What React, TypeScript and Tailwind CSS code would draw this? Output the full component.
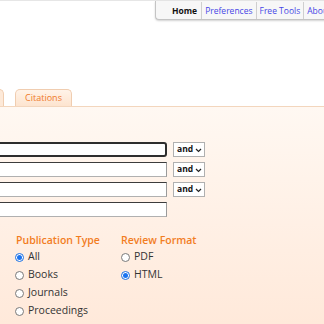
import React from "react";

function Radio({ checked, label }: { checked?: boolean; label: string }) {
  return (
    <div className="flex items-center h-[18px] gap-[4px]">
      {checked ? (
        <span className="w-[9px] h-[9px] rounded-full border border-[#1a6fe0] bg-white flex items-center justify-center">
          <span className="w-[5px] h-[5px] rounded-full bg-[#1a73f0]" />
        </span>
      ) : (
        <span className="w-[9px] h-[9px] rounded-full border border-[#7a7a7a] bg-white" />
      )}
      <span className="text-[10.5px] text-[#333]">{label}</span>
    </div>
  );
}

function AndSelect() {
  return (
    <div className="ml-[6px] w-[32px] h-[15px] border border-[#b0b0b0] bg-white flex items-center pl-[3px] gap-[2px]">
      <span className="text-[8.5px] font-bold text-[#111] leading-none">and</span>
      <svg width="7" height="5" viewBox="0 0 7 5" className="mt-[1px]">
        <path d="M1 1 L3.5 3.5 L6 1" fill="none" stroke="#222" strokeWidth="1.2" />
      </svg>
    </div>
  );
}

export default function App() {
  return (
    <div
      className="w-[324px] h-[324px] overflow-hidden bg-white flex flex-col"
      style={{ fontFamily: '"Open Sans", "Liberation Sans", sans-serif' }}
    >
      <div className="border-t border-[#e6e6e6] flex">
        <div className="ml-[155px] h-[19px] flex items-center bg-[#f7f7f7] border-l border-b border-[#c4c4c4] rounded-bl-[4px] shadow-[0_1px_2px_rgba(0,0,0,0.18)] whitespace-nowrap shrink-0">
          <span className="pl-[16px] pr-[4px] text-[8.5px] font-bold text-[#111] border-r border-[#cfcfcf] leading-[17px]">Home</span>
          <span className="px-[3px] text-[8.5px] text-[#4646e6] border-r border-[#cfcfcf] leading-[17px]">Preferences</span>
          <span className="px-[3px] text-[8.5px] text-[#4646e6] border-r border-[#cfcfcf] leading-[17px]">Free Tools</span>
          <span className="px-[3px] text-[8.5px] text-[#4646e6] leading-[17px]">About</span>
        </div>
      </div>
      <div className="mt-[69px] flex items-end gap-[11px] -ml-[56px] h-[17px]">
        <div className="w-[60px] h-[17px] rounded-t-[5px] border border-b-0 border-[#f0cdb0] bg-[#fde9d8]" />
        <div className="w-[57px] h-[17px] rounded-t-[5px] border border-b-0 border-[#f0cdb0] bg-gradient-to-b from-[#fff3e8] to-[#fde4cf] flex items-center justify-center">
          <span className="text-[9px] text-[#f07a2a] font-medium">Citations</span>
        </div>
      </div>
      <div className="flex-1 border-t border-[#f3d6bd] bg-gradient-to-b from-[#fff8f2] to-[#ffe9da] pt-[35px]">
        <div className="flex flex-col gap-[5px] -ml-[40px]">
          <div className="flex items-center">
            <div className="w-[207px] h-[15px] border-2 border-[#2e2e2e] rounded-[3px] bg-white" />
            <AndSelect />
          </div>
          <div className="flex items-center">
            <div className="w-[207px] h-[15px] border border-t-[#3c3c3c] border-l-[#3c3c3c] border-r-[#9a9a9a] border-b-[#b0b0b0] bg-white" />
            <AndSelect />
          </div>
          <div className="flex items-center">
            <div className="w-[207px] h-[15px] border border-t-[#3c3c3c] border-l-[#3c3c3c] border-r-[#9a9a9a] border-b-[#b0b0b0] bg-white" />
            <AndSelect />
          </div>
          <div className="flex items-center">
            <div className="w-[207px] h-[15px] border border-t-[#3c3c3c] border-l-[#3c3c3c] border-r-[#9a9a9a] border-b-[#b0b0b0] bg-white" />
          </div>
        </div>
        <div className="flex mt-[15px] ml-[15px]">
          <div className="w-[106px] flex flex-col">
            <div className="text-[10.5px] font-semibold text-[#f27d1f] h-[16px] leading-[16px] ml-[1px]">Publication Type</div>
            <Radio checked label="All" />
            <Radio label="Books" />
            <Radio label="Journals" />
            <Radio label="Proceedings" />
          </div>
          <div className="flex flex-col">
            <div className="text-[10.5px] font-semibold text-[#f27d1f] h-[16px] leading-[16px]">Review Format</div>
            <Radio label="PDF" />
            <Radio checked label="HTML" />
          </div>
        </div>
      </div>
    </div>
  );
}
